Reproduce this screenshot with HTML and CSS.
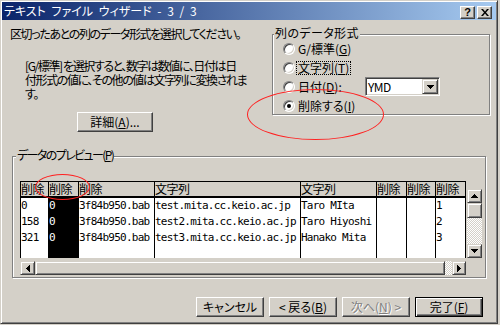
FILE: index.html
```html
<!DOCTYPE html>
<html lang="ja">
<head>
<meta charset="utf-8">
<title>テキスト ファイル ウィザード - 3 / 3</title>
<link rel="stylesheet" href="styles.css">
</head>
<body>
<div class="window">
  <div class="titlebar">
    <span class="title">テキスト ファイル ウィザード - 3 / 3</span>
    <div class="caption-btns">
      <span class="cbtn help">?</span>
      <span class="cbtn close"><svg width="8" height="7" viewBox="0 0 8 7"><path d="M0 0h2l2 2.5L6 0h2L5 3.5 8 7H6L4 4.5 2 7H0l3-3.5z" fill="#000"/></svg></span>
    </div>
  </div>
  <div class="client">
    <div class="top">
      <div class="intro">
        <p class="lead">区切ったあとの列のデータ形式を選択してください。</p>
        <p class="desc">[G/標準] を選択すると、数字は数値に、日付は日<br>付形式の値に、その他の値は文字列に変換されま<br>す。</p>
        <button class="btn detail">詳細(<u>A</u>)...</button>
      </div>
      <div class="group format">
        <div class="legend">列のデータ形式</div>
        <div class="radios">
          <div class="radio-row"><span class="radio"></span><span class="label">G/標準(<u>G</u>)</span></div>
          <div class="radio-row"><span class="radio"></span><span class="label focus">文字列(<u>T</u>)</span></div>
          <div class="radio-row"><span class="radio"></span><span class="label">日付(<u>D</u>):</span>
            <div class="combo"><span class="combo-text">YMD</span><span class="drop"><svg width="7" height="4" viewBox="0 0 7 4"><path d="M0 0h7v1h-1v1h-1v1h-1v1h-1V3h-1V2h-1V1H0z" fill="#000"/></svg></span></div>
          </div>
          <div class="radio-row"><span class="radio checked"></span><span class="label">削除する(<u>I</u>)</span></div>
        </div>
      </div>
    </div>
    <div class="group preview">
      <div class="legend">データのプレビュー(<u>P</u>)</div>
      <div class="preview-body">
        <div class="grid">
          <div class="h">削除</div><div class="h">削除</div><div class="h">削除</div><div class="h">文字列</div><div class="h">文字列</div><div class="h">削除</div><div class="h">削除</div><div class="h">削除</div>
          <div class="c">0</div><div class="c sel">0</div><div class="c">3f84b950.bab</div><div class="c">test.mita.cc.keio.ac.jp</div><div class="c">Taro MIta</div><div class="c"></div><div class="c"></div><div class="c">1</div>
          <div class="c">158</div><div class="c sel">0</div><div class="c">3f84b950.bab</div><div class="c">test2.mita.cc.keio.ac.jp</div><div class="c">Taro Hiyoshi</div><div class="c"></div><div class="c"></div><div class="c">2</div>
          <div class="c">321</div><div class="c sel">0</div><div class="c">3f84b950.bab</div><div class="c">test3.mita.cc.keio.ac.jp</div><div class="c">Hanako Mita</div><div class="c"></div><div class="c"></div><div class="c">3</div>
          <div class="c"></div><div class="c sel"></div><div class="c"></div><div class="c"></div><div class="c"></div><div class="c"></div><div class="c"></div><div class="c"></div>
        </div>
        <div class="vscroll">
          <span class="sbtn vbtn"><svg width="7" height="4" viewBox="0 0 7 4"><path d="M3 0h1v1h1v1h1v1h1v1H0V3h1V2h1V1h1z" fill="#000"/></svg></span>
          <span class="thumb vthumb"></span>
          <span class="track"></span>
          <span class="sbtn vbtn"><svg width="7" height="4" viewBox="0 0 7 4"><path d="M0 0h7v1h-1v1h-1v1h-1v1h-1V3h-1V2h-1V1H0z" fill="#000"/></svg></span>
        </div>
        <div class="hscroll">
          <span class="sbtn hbtn-l"><svg width="4" height="7" viewBox="0 0 4 7"><path d="M3 0h1v7h-1v-1h-1v-1h-1v-1H0V3h1V2h1V1h1z" fill="#000"/></svg></span>
          <span class="thumb hthumb"></span>
          <span class="track"></span>
          <span class="sbtn hbtn-r"><svg width="4" height="7" viewBox="0 0 4 7"><path d="M0 0h1v1h1v1h1v1h1v1h-1v1h-1v1h-1v1H0z" fill="#000"/></svg></span>
        </div>
      </div>
    </div>
    <div class="buttons">
      <button class="btn">キャンセル</button>
      <button class="btn">&lt; 戻る(<u>B</u>)</button>
      <button class="btn disabled">次へ(<u>N</u>) &gt;</button>
      <button class="btn default">完了(<u>F</u>)</button>
    </div>
  </div>
  <div class="ellipse e1"></div>
  <div class="ellipse e2"></div>
</div>
</body>
</html>
```

FILE: styles.css
```css
* { box-sizing: border-box; }
html, body { margin: 0; padding: 0; background: #d4d0c8; }
body {
  font-family: "Noto Sans CJK JP", sans-serif;
  font-size: 12px;
  letter-spacing: -1.4px;
  color: #000;
  font-feature-settings: "palt";
}
u { text-decoration: underline; text-underline-offset: 1px; }

.window {
  position: relative;
  width: 498px;
  height: 324px;
  background: #d4d0c8;
  border: 1px solid;
  border-color: #d4d0c8 #404040 #404040 #d4d0c8;
  box-shadow: inset 1px 1px #fff, inset -1px -1px #808080;
  padding: 1px;
}

.titlebar {
  height: 18px;
  display: flex;
  align-items: flex-start;
  background: linear-gradient(to right, #0a246a, #a6caf0);
  padding: 0 4px 0 2px;
}
.title { color: #fff; line-height: 18px; flex: 1; white-space: nowrap; letter-spacing: 0; word-spacing: 3px; }
.caption-btns { display: flex; gap: 2px; margin-top: 4px; }
.cbtn {
  width: 15px;
  height: 13px;
  display: flex;
  align-items: center;
  justify-content: center;
  background: #d4d0c8;
  border: 1px solid;
  border-color: #fff #404040 #404040 #fff;
  box-shadow: inset -1px -1px #808080;
}
.help { font-family: "Liberation Sans", sans-serif; font-weight: bold; font-size: 11px; line-height: 11px; letter-spacing: 0; }

.client { padding-top: 7px; }
.top { display: flex; align-items: flex-start; height: 105px; }
.intro { width: 270px; }
.lead { margin: 0; padding-left: 8px; line-height: 14px; white-space: nowrap; }
.desc { margin: 18px 0 0; padding-left: 23px; line-height: 14px; white-space: nowrap; }

.btn {
  display: block;
  width: 68px;
  height: 20px;
  padding: 0;
  margin: 0;
  font-family: inherit;
  font-size: 12px;
  letter-spacing: 0;
  font-feature-settings: "palt";
  line-height: 16px;
  color: #000;
  background: #d4d0c8;
  border: 1px solid;
  border-color: #fff #404040 #404040 #fff;
  box-shadow: inset -1px -1px #808080;
  border-radius: 0;
}
.detail { width: 76px; margin: 11px 0 0 75px; }
.btn.disabled { color: #808080; text-shadow: 1px 1px 0 #fff; }
.btn.default {
  border-color: #000;
  box-shadow: inset 1px 1px #fff, inset -1px -1px #404040, inset -2px -2px #808080;
}

.group {
  border: 1px solid #808080;
  box-shadow: inset 1px 1px #fff, 1px 1px #fff;
}
.legend {
  width: max-content;
  margin: -9px 0 -5px 1px;
  padding: 0 1px;
  line-height: 14px;
  background: #d4d0c8;
  white-space: nowrap;
}
.format .legend { letter-spacing: 0.4px; }
.preview .legend { margin-left: 3px; letter-spacing: -1.6px; }
.format { margin-top: 7px; width: 218px; height: 81px; }
.radios { padding: 4px 0 0 10px; }
.radio-row { display: flex; align-items: center; height: 19px; }
.radio {
  position: relative;
  flex: none;
  width: 12px;
  height: 12px;
  border-radius: 50%;
  background: #fff;
  border: 1px solid;
  border-color: #808080 #fff #fff #808080;
  box-shadow: inset 1px 1px #404040, inset -1px -1px #d4d0c8;
}
.radio.checked::after {
  content: "";
  position: absolute;
  left: 3px;
  top: 3px;
  width: 4px;
  height: 4px;
  border-radius: 50%;
  background: #000;
}
.label { margin-left: 3px; line-height: 14px; white-space: nowrap; letter-spacing: 0; }
.label.focus { outline: 1px dotted #000; outline-offset: 0; line-height: 12px; padding: 0 1px; margin-left: 2px; }

.combo {
  margin-left: auto;
  margin-right: 49px;
  width: 75px;
  height: 19px;
  display: flex;
  background: #fff;
  border: 1px solid;
  border-color: #808080 #fff #fff #808080;
  box-shadow: inset 1px 1px #404040, inset -1px -1px #d4d0c8;
  padding: 1px;
}
.combo-text { flex: 1; padding-left: 1px; line-height: 15px; letter-spacing: -0.5px; }
.drop {
  width: 16px;
  height: 15px;
  display: flex;
  align-items: center;
  justify-content: center;
  background: #d4d0c8;
  border: 1px solid;
  border-color: #d4d0c8 #404040 #404040 #d4d0c8;
  box-shadow: inset 1px 1px #fff, inset -1px -1px #808080;
}

.preview { width: 474px; margin: 24px 0 0 10px; }
.preview-body {
  display: grid;
  grid-template-columns: 446px 15px;
  grid-template-rows: 77px 14px;
  gap: 3px 1px;
  padding: 24px 0 2px 7px;
}
.grid {
  display: grid;
  grid-template-columns: 28px 30px 76px 146px 76px 30px 29px 30px;
  grid-template-rows: 16px 16px 16px 16px 12px;
  border-top: 1px solid #000;
  border-left: 1px solid #000;
  background: #fff;
}
.grid > div { border-right: 1px solid #000; white-space: nowrap; }
.grid .h { background: #d4d0c8; border-bottom: 2px solid #000; line-height: 14px; letter-spacing: -0.5px; }
.grid .c {
  font-family: "DejaVu Sans Mono", monospace;
  font-size: 11px;
  letter-spacing: -0.75px;
  line-height: 16px;
  font-feature-settings: normal;
}
.grid .sel { background: #000; color: #fff; }

.sbtn, .thumb {
  display: flex;
  align-items: center;
  justify-content: center;
  background: #d4d0c8;
  border: 1px solid;
  border-color: #d4d0c8 #404040 #404040 #d4d0c8;
  box-shadow: inset 1px 1px #fff, inset -1px -1px #808080;
  flex: none;
}
.track {
  flex: 1;
  background: repeating-conic-gradient(#fff 0 25%, #d4d0c8 0 50%) 0 0 / 2px 2px;
}
.vscroll { align-self: end; height: 69px; display: flex; flex-direction: column; }
.vbtn { height: 14px; }
.vthumb { height: 15px; }
.hscroll { grid-column: 1; display: flex; }
.hbtn-l { width: 15px; }
.hbtn-r { width: 14px; }
.hthumb { width: 410px; }

.buttons { display: flex; gap: 5px; margin-top: 19px; padding-left: 194px; }

.ellipse { position: absolute; border: 1px solid #ff2020; border-radius: 50%; }
.e1 { left: 246px; top: 88px; width: 137px; height: 51px; }
.e2 { left: 34px; top: 173px; width: 55px; height: 26px; }
```
